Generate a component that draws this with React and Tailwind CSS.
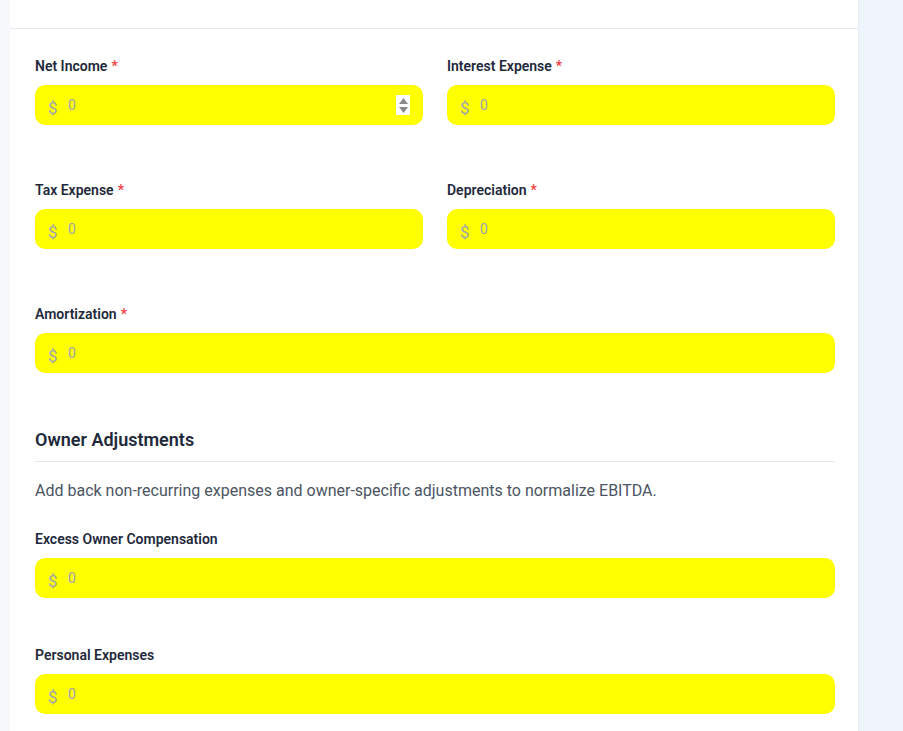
function Spinner() {
  return (
    <span className="absolute right-[13px] top-[10px] flex h-[20px] w-[14px] flex-col items-center justify-center gap-[3px] bg-white">
      <svg width="9" height="6" viewBox="0 0 9 6"><path d="M4.5 0L9 6H0z" fill="#8a8a8a" /></svg>
      <svg width="9" height="6" viewBox="0 0 9 6"><path d="M0 0h9L4.5 6z" fill="#8a8a8a" /></svg>
    </span>
  )
}

function MoneyField({ label, required, spinner }) {
  return (
    <div>
      <label className="block text-sm font-semibold leading-5 text-[#1e293b]">
        {label}
        {required && <span className="ml-1 text-[#ef4444]">*</span>}
      </label>
      <div className="relative mt-[9px] h-10 rounded-[10px] bg-[#ffff00]">
        <span className="absolute left-[13px] top-[11px] text-[17px] leading-6 text-[#9ca3af]">$</span>
        <span className="absolute left-[33px] top-[8px] text-sm leading-6 text-[#9ca3af]">0</span>
        {spinner && <Spinner />}
      </div>
    </div>
  )
}

export default function App() {
  return (
    <div className="flex min-h-[731px] bg-[#eff4fd] font-['Segoe_UI',Roboto,sans-serif]">
      <div className="w-[10px] shrink-0 bg-[#f6f8fc]" />
      <main className="w-[849px] shrink-0 border-r border-[#e8edf4] bg-white">
        <div className="h-[29px] border-b border-[#e2e8f0]" />
        <div className="px-[25px] pr-[23px] pt-[27px]">
          <div className="grid grid-cols-2 gap-x-6 gap-y-[55px]">
            <MoneyField label="Net Income" required spinner />
            <MoneyField label="Interest Expense" required />
            <MoneyField label="Tax Expense" required />
            <MoneyField label="Depreciation" required />
            <div className="col-span-2">
              <MoneyField label="Amortization" required />
            </div>
          </div>

          <section className="mt-[53px]">
            <h3 className="border-b border-[#e2e8f0] pb-[7px] text-lg font-semibold leading-7 text-[#1e293b]">
              Owner Adjustments
            </h3>
            <p className="mt-[17px] text-base leading-6 text-[#4b5563]">
              Add back non-recurring expenses and owner-specific adjustments to normalize EBITDA.
            </p>
            <div className="mt-[26px] space-y-[47px]">
              <MoneyField label="Excess Owner Compensation" />
              <MoneyField label="Personal Expenses" />
            </div>
          </section>
        </div>
      </main>
    </div>
  )
}
